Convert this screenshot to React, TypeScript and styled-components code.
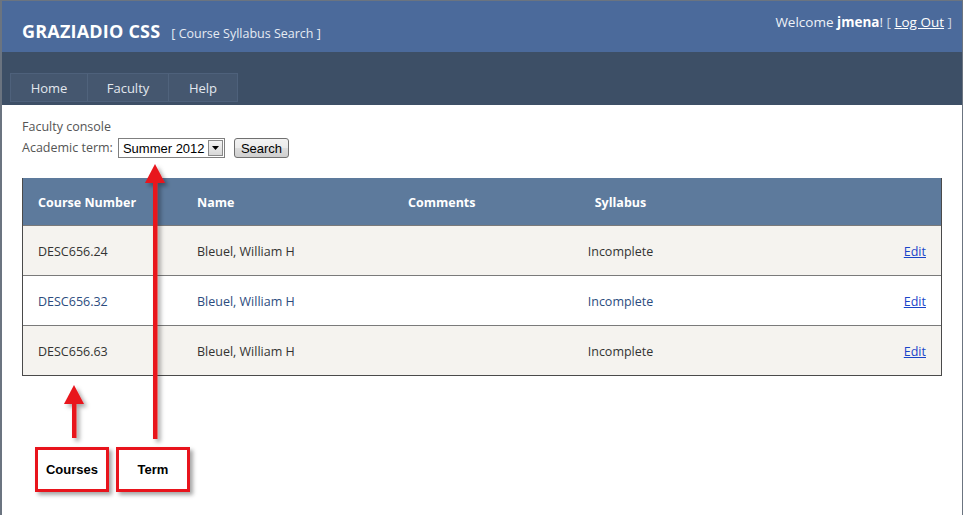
import React from "react";
import styled, { createGlobalStyle } from "styled-components";

const Global = createGlobalStyle`
  html, body { margin: 0; padding: 0; background: #fff; }
  body { font-family: "Open Sans", "Noto Sans", sans-serif; }
  * { box-sizing: border-box; }
`;

const Page = styled.div`
  position: relative;
  width: 963px;
  height: 515px;
  border: 1px solid #6b7480;
  border-left-width: 2px;
  border-bottom: none;
  overflow: hidden;
  background: #fff;
`;

const Header = styled.header`
  height: 51px;
  background: #4b6a9b;
  display: flex;
  align-items: flex-start;
  justify-content: space-between;
  padding: 0 10px 0 20px;
`;

const Brand = styled.div`
  display: flex;
  align-items: baseline;
  gap: 11px;
  margin-top: 18px;
`;

const Title = styled.span`
  color: #fff;
  font-weight: 700;
  font-size: 18px;
  letter-spacing: 0.2px;
`;

const Subtitle = styled.span`
  color: #e6ebf3;
  font-size: 12.5px;
`;

const Welcome = styled.div`
  margin-top: 12px;
  color: #eef2f8;
  font-size: 13.5px;
  b { color: #fff; }
  a { color: #fff; text-decoration: underline; }
`;

const Bracket = styled.span`
  color: #c7d2e2;
`;

const Nav = styled.nav`
  height: 53px;
  background: #3d4f66;
  display: flex;
  align-items: flex-end;
  padding: 0 0 3px 8px;
`;

const Tabs = styled.div`
  display: flex;
  border: 1px solid #4e617b;
  background: #45576f;
`;

const Tab = styled.div<{ $w: number }>`
  width: ${(p) => p.$w}px;
  height: 27px;
  display: flex;
  align-items: center;
  justify-content: center;
  color: #e2e7ee;
  font-size: 13px;
  border-right: 1px solid #50637c;
  &:last-child { border-right: none; }
`;

const Content = styled.main`
  padding: 13px 20px 0 20px;
`;

const Caption = styled.div`
  color: #555;
  font-size: 12.5px;
  line-height: 18px;
`;

const TermRow = styled.div`
  display: flex;
  align-items: center;
  margin-top: 2px;
  gap: 5px;
`;

const Select = styled.div`
  display: flex;
  align-items: center;
  width: 107px;
  height: 20px;
  border: 1px solid #7f7f7f;
  background: #fff;
  font-family: "Liberation Sans", Arial, sans-serif;
  font-size: 13px;
  color: #000;
  padding: 1px 1px 1px 4px;
`;

const SelectText = styled.span`
  flex: 1;
`;

const SelectBtn = styled.span`
  width: 15px;
  height: 16px;
  border: 1px solid #8a8a8a;
  background: linear-gradient(#f4f4f4, #d8d8d8);
  display: flex;
  align-items: center;
  justify-content: center;
`;

const Button = styled.button`
  margin-left: 4px;
  height: 20px;
  padding: 0 6px;
  border: 1px solid #707070;
  border-radius: 3px;
  background: linear-gradient(#f2f2f2 0%, #ebebeb 50%, #dddddd 51%, #cfcfcf 100%);
  font-family: "Liberation Sans", Arial, sans-serif;
  font-size: 13px;
  color: #000;
`;

const Table = styled.div`
  margin-top: 20px;
  width: 920px;
  border: 1px solid #4a4a4a;
  border-top: none;
`;

const cols = "159px 211px 165px 125px 1fr";

const HeadRow = styled.div`
  display: grid;
  grid-template-columns: ${cols};
  height: 47px;
  padding-top: 2px;
  align-items: center;
  background: #5d7a9c;
  color: #fff;
  font-weight: 700;
  font-size: 12.5px;
`;

const Row = styled.div<{ $alt: boolean; $blue: boolean }>`
  display: grid;
  grid-template-columns: ${cols};
  height: 50px;
  padding-top: 2px;
  align-items: center;
  background: ${(p) => (p.$alt ? "#f5f3ef" : "#ffffff")};
  color: ${(p) => (p.$blue ? "#2c4c7e" : "#333")};
  font-size: 12.5px;
  border-top: 1px solid #7a7a7a;
  &:first-of-type { border-top: none; }
`;

const Cell = styled.div<{ $align?: string }>`
  padding: 0 15px;
  text-align: ${(p) => p.$align || "left"};
`;

const EditLink = styled.a`
  color: #1a45c9;
  text-decoration: underline;
`;

const Overlay = styled.svg`
  position: absolute;
  left: 0;
  top: 0;
  pointer-events: none;
`;

const Label = styled.div<{ $x: number }>`
  position: absolute;
  left: ${(p) => p.$x}px;
  top: 446px;
  width: 74px;
  height: 45px;
  border: 3px solid #e8141c;
  background: #fff;
  box-shadow: 3px 3px 4px rgba(0, 0, 0, 0.35);
  display: flex;
  align-items: center;
  justify-content: center;
  font-family: "Liberation Sans", Arial, sans-serif;
  font-weight: 700;
  font-size: 13px;
  color: #000;
`;

const rows = [
  { num: "DESC656.24", alt: true, blue: false },
  { num: "DESC656.32", alt: false, blue: true },
  { num: "DESC656.63", alt: true, blue: false },
];

function Arrow({ x, tip, end }: { x: number; tip: number; end: number }) {
  return (
    <g>
      <rect x={x - 2} y={tip + 17} width={4.5} height={end - tip - 17} fill="#e8141c" />
      <polygon points={`${x},${tip} ${x + 10},${tip + 19} ${x - 10},${tip + 19}`} fill="#e8141c" />
    </g>
  );
}

export default function App() {
  return (
    <Page>
      <Global />
      <Header>
        <Brand>
          <Title>GRAZIADIO CSS</Title>
          <Subtitle>[ Course Syllabus Search ]</Subtitle>
        </Brand>
        <Welcome>
          Welcome <b>jmena</b>! <Bracket>[</Bracket> <a>Log Out</a> <Bracket>]</Bracket>
        </Welcome>
      </Header>
      <Nav>
        <Tabs>
          <Tab $w={77}>Home</Tab>
          <Tab $w={81}>Faculty</Tab>
          <Tab $w={68}>Help</Tab>
        </Tabs>
      </Nav>
      <Content>
        <Caption>Faculty console</Caption>
        <TermRow>
          <Caption>Academic term:</Caption>
          <Select>
            <SelectText>Summer 2012</SelectText>
            <SelectBtn>
              <svg width="7" height="4" viewBox="0 0 7 4">
                <polygon points="0,0 7,0 3.5,4" fill="#000" />
              </svg>
            </SelectBtn>
          </Select>
          <Button>Search</Button>
        </TermRow>
        <Table>
          <HeadRow>
            <Cell>Course Number</Cell>
            <Cell>Name</Cell>
            <Cell>Comments</Cell>
            <Cell $align="center">Syllabus</Cell>
            <Cell />
          </HeadRow>
          {rows.map((r) => (
            <Row key={r.num} $alt={r.alt} $blue={r.blue}>
              <Cell>{r.num}</Cell>
              <Cell>Bleuel, William H</Cell>
              <Cell />
              <Cell $align="center">Incomplete</Cell>
              <Cell $align="right">
                <EditLink>Edit</EditLink>
              </Cell>
            </Row>
          ))}
        </Table>
      </Content>
      <Overlay width="963" height="515">
        <defs>
          <filter id="sh" x="-50%" y="-10%" width="200%" height="130%">
            <feDropShadow dx="3" dy="3" stdDeviation="2" floodColor="#000" floodOpacity="0.35" />
          </filter>
        </defs>
        <g filter="url(#sh)">
          <Arrow x={72} tip={384} end={437} />
          <Arrow x={153} tip={163} end={438} />
        </g>
      </Overlay>
      <Label $x={33}>Courses</Label>
      <Label $x={114}>Term</Label>
    </Page>
  );
}
